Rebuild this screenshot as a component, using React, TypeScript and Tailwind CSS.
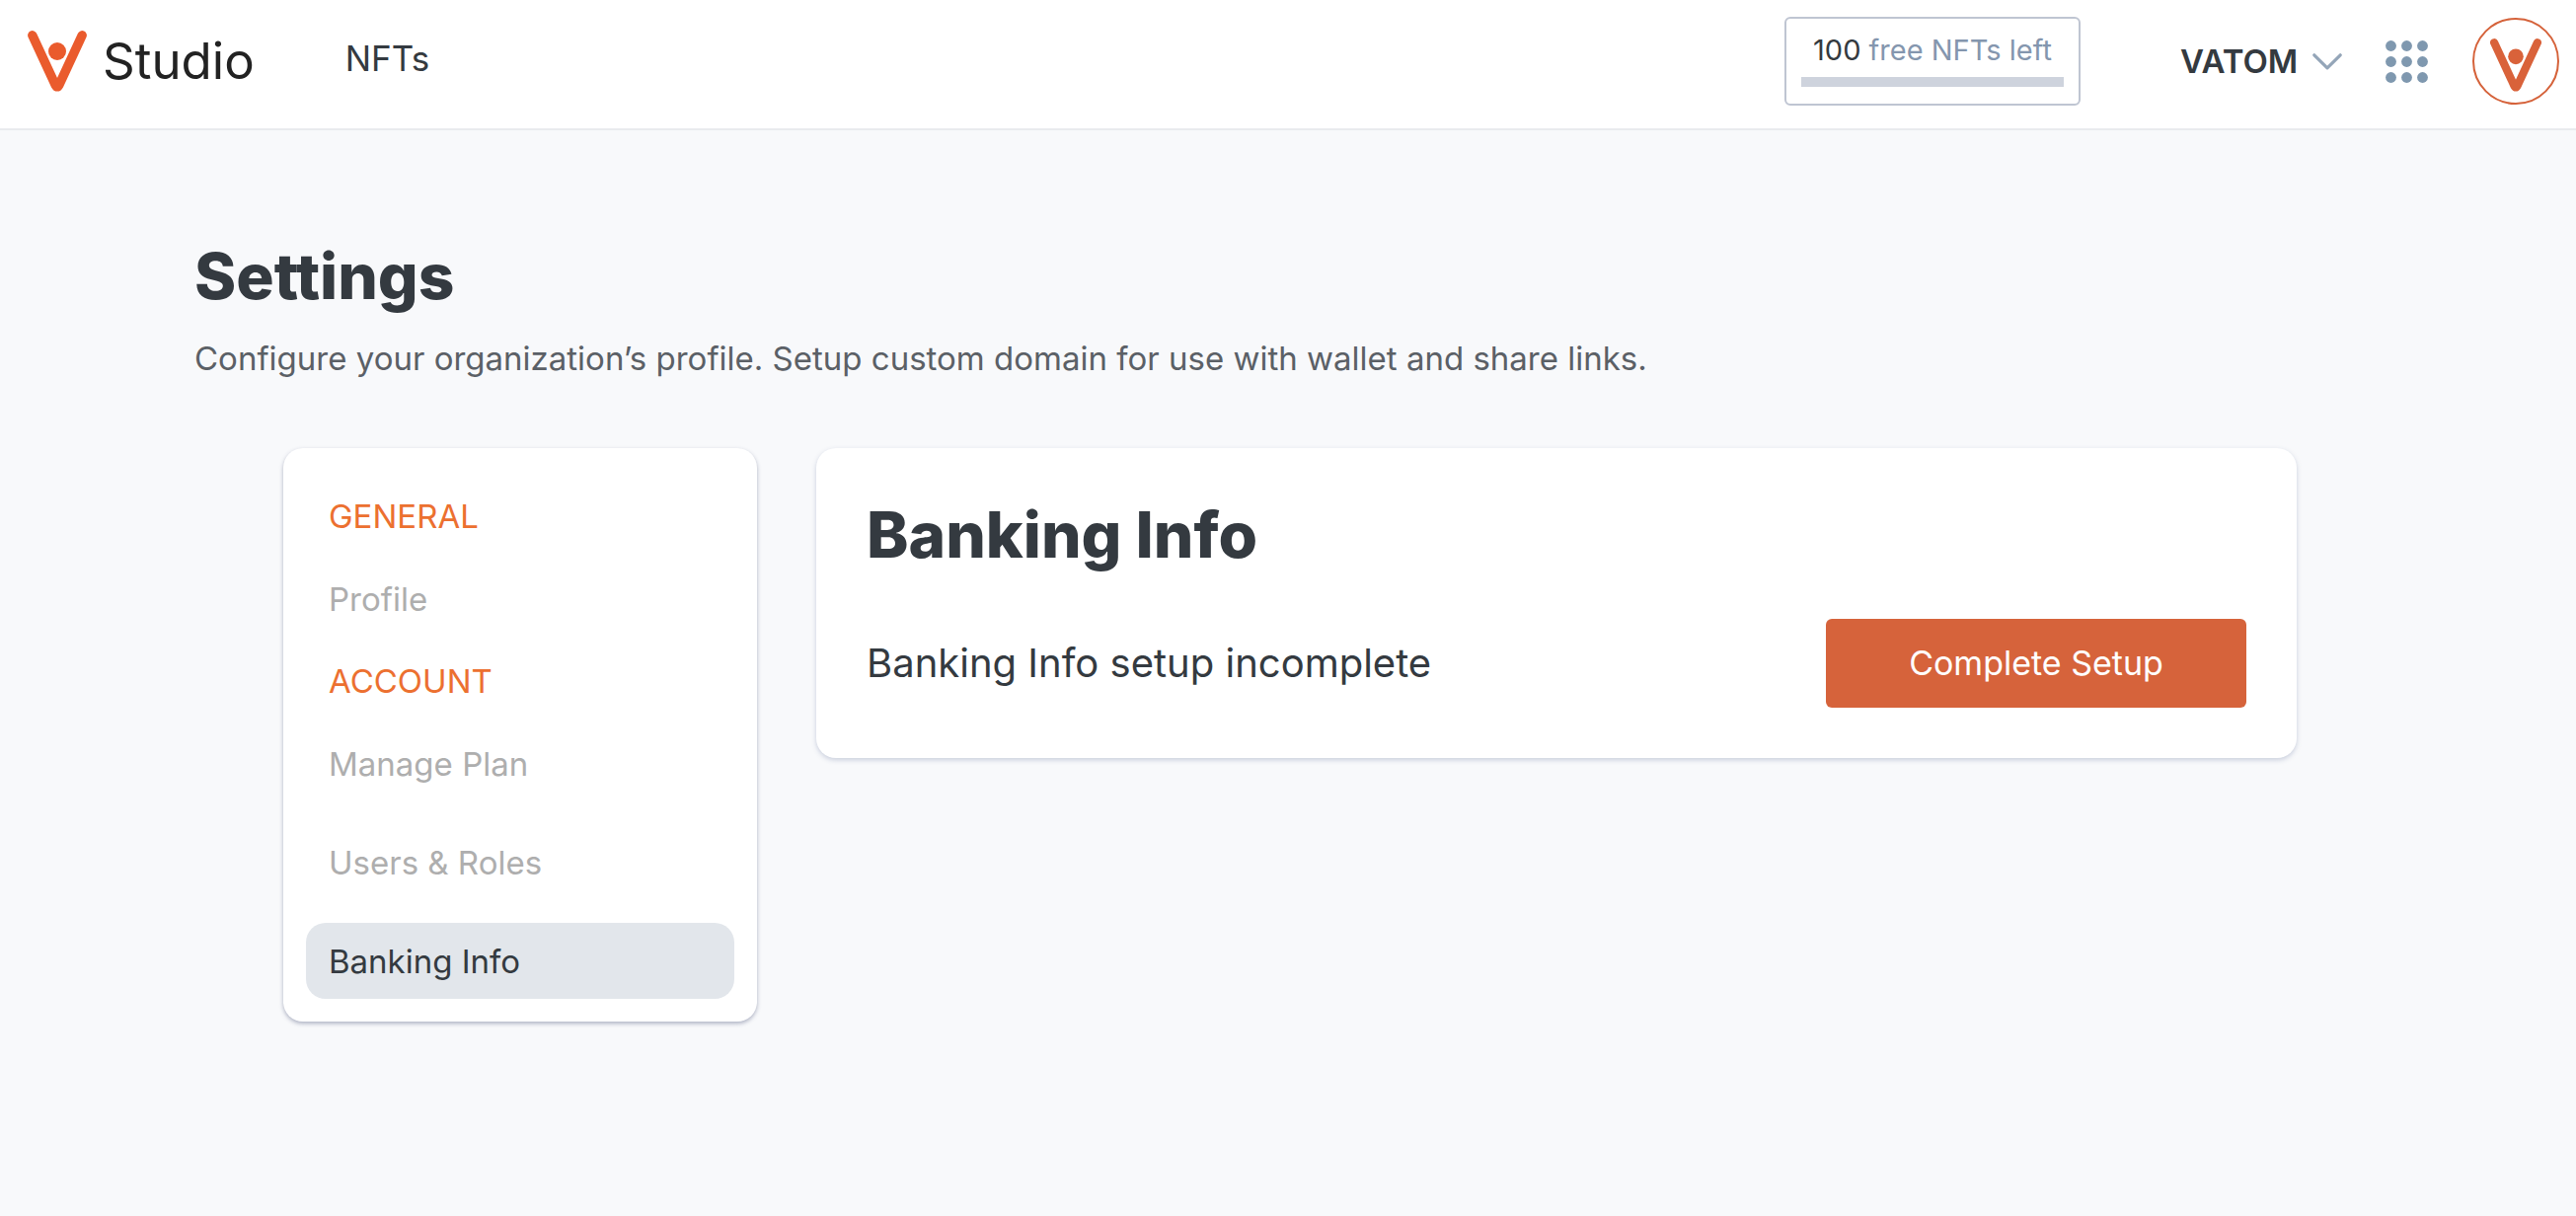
import type { ReactNode } from "react";

interface NavItem {
  label: string;
  active?: boolean;
}

interface NavSection {
  title: string;
  items: NavItem[];
}

const sections: NavSection[] = [
  {
    title: "GENERAL",
    items: [{ label: "Profile" }],
  },
  {
    title: "ACCOUNT",
    items: [
      { label: "Manage Plan" },
      { label: "Users & Roles" },
      { label: "Banking Info", active: true },
    ],
  },
];

const VatomMark = ({ className }: { className: string }) => (
  <svg viewBox="0 0 60 62" fill="none" className={className} aria-hidden="true">
    <path
      d="M4.8 4.8 L28.2 55.2 Q30 58.6 31.8 55.2 L55.2 4.8"
      stroke="currentColor"
      strokeWidth="9.4"
      strokeLinecap="round"
      strokeLinejoin="round"
    />
    <circle cx="30" cy="21" r="9" fill="currentColor" />
  </svg>
);

const AppsGrid = () => (
  <svg viewBox="0 0 43 43" className="w-[43px] h-[43px]" fill="currentColor" aria-hidden="true">
    {[5.5, 21.5, 37.5].map((cy) =>
      [5.5, 21.5, 37.5].map((cx) => <circle key={`${cx}-${cy}`} cx={cx} cy={cy} r="5.4" />)
    )}
  </svg>
);

const Header = () => (
  <header className="flex items-center bg-white border-b-2 border-[#e9ebee] pt-[17px] pb-[23px] pl-7 pr-[17px]">
    <a href="#" className="flex items-center gap-4 text-[#ea5b2d]">
      <VatomMark className="w-[60px] h-[62px]" />
      <span className="text-[51px] leading-[60px] text-[#222222]">Studio</span>
    </a>
    <nav className="ml-[92px] pb-1.5">
      <a href="#" className="text-[35px] leading-[48px] text-[#343a40]">NFTs</a>
    </nav>
    <div className="ml-auto flex items-center">
      <div className="w-[300px] h-[90px] border-2 border-[#bfc5d2] rounded-md px-[15px] pt-3">
        <div className="text-[29px] leading-10 text-center text-[#8496ae] whitespace-nowrap">
          <span className="text-[#343a40]">100</span> free NFTs left
        </div>
        <div
          role="progressbar"
          aria-label="Free NFTs used"
          aria-valuenow={0}
          aria-valuemin={0}
          aria-valuemax={100}
          className="h-2.5 mt-[7px] bg-[#ced3dd]"
        />
      </div>
      <div className="relative ml-[101px] flex items-center">
        <select
          aria-label="Organization"
          className="appearance-none bg-transparent text-[33px] leading-[48px] font-semibold text-[#343a40] pr-11"
        >
          <option>VATOM</option>
        </select>
        <svg
          viewBox="0 0 30 17"
          className="absolute right-0 w-[30px] h-[17px] pointer-events-none text-[#94a5b8]"
          fill="none"
          stroke="currentColor"
          strokeWidth="3.2"
          strokeLinecap="round"
          strokeLinejoin="round"
          aria-hidden="true"
        >
          <path d="M1.8 1.8 L15 14.8 L28.2 1.8" />
        </svg>
      </div>
      <button type="button" aria-label="Apps" className="ml-11 text-[#7f98af]">
        <AppsGrid />
      </button>
      <button
        type="button"
        aria-label="Account"
        className="ml-[45px] w-[88px] h-[88px] flex items-center justify-center rounded-full border-2 border-[#d5623a] text-[#d9623a]"
      >
        <VatomMark className="w-[52px] h-[54px] mt-2" />
      </button>
    </div>
  </header>
);

const SideNav = () => (
  <nav
    aria-label="Settings"
    className="w-[480px] shrink-0 flex flex-col gap-[21px] bg-white rounded-[20px] px-[23px] pt-[45px] pb-[23px] shadow-[0_2px_4px_rgba(60,70,110,0.4)]"
  >
    {sections.map((section) => (
      <div key={section.title} className="flex flex-col gap-[21px]">
        <h3 className="px-[23px] text-[33px] leading-[48px] text-[#ec7030]">{section.title}</h3>
        <ul className="flex flex-col gap-[23px]">
          {section.items.map((item) => (
            <li key={item.label}>
              <a
                href="#"
                aria-current={item.active ? "page" : undefined}
                className={`flex items-center h-[77px] px-[23px] rounded-[20px] text-[33px] leading-[48px] ${
                  item.active ? "bg-[#e2e6eb] text-[#343a40]" : "text-[#aeaeae]"
                }`}
              >
                {item.label}
              </a>
            </li>
          ))}
        </ul>
      </div>
    ))}
  </nav>
);

const Panel = ({ heading, children }: { heading: string; children: ReactNode }) => (
  <section className="flex-1 min-w-0 bg-white rounded-[20px] px-[51px] pt-12 pb-[51px] shadow-[0_2px_5px_rgba(60,80,130,0.25)]">
    <h2 className="text-[64px] leading-[80px] font-extrabold text-[#343a40]">{heading}</h2>
    <div className="mt-[45px] flex items-center justify-between gap-6">{children}</div>
  </section>
);

export default function App() {
  return (
    <div className="min-h-screen bg-[#f8f9fb] font-['Inter',sans-serif]">
      <Header />
      <main className="px-[197px] pt-[108px] pb-20">
        <h1 className="text-[64px] leading-[80px] font-extrabold text-[#343a40]">Settings</h1>
        <p className="mt-[19px] text-[33px] leading-[48px] text-[#5b6066]">
          Configure your organization’s profile. Setup custom domain for use with wallet and share links.
        </p>
        <div className="mt-[67px] pl-[90px] pr-[86px] flex items-start gap-[60px]">
          <SideNav />
          <Panel heading="Banking Info">
            <p className="text-[40px] leading-[48px] text-[#343a40]">Banking Info setup incomplete</p>
            <button
              type="button"
              className="w-[426px] h-[90px] shrink-0 rounded-md bg-[#d6633b] text-white text-[34px] leading-[48px]"
            >
              Complete Setup
            </button>
          </Panel>
        </div>
      </main>
    </div>
  );
}
